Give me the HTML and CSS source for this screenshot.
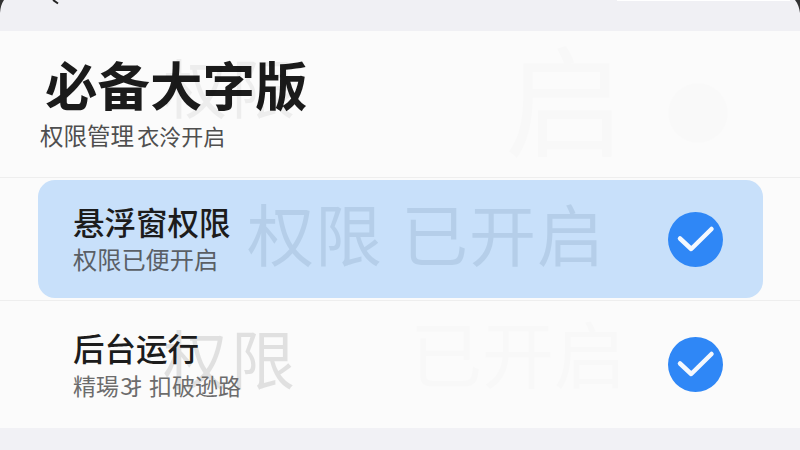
FILE: index.html
```html
<!DOCTYPE html>
<html lang="zh">
<head>
<meta charset="utf-8">
<title>必备大字版</title>
<link rel="stylesheet" href="styles.css">
</head>
<body>
<div class="screen">
  <div class="strip-top"><span class="notch-line"></span>
    <svg class="corners" viewBox="0 0 800 14" aria-hidden="true">
      <path class="mark" d="M53 0 L58 3.500"/>
      <path class="mark-fill" d="M0 13 Q0.500 5 4 0 L0 0 Z"/>
      <path class="mark-fill" d="M800 13 Q799 5 795 0 L800 0 Z"/>
    </svg>
  </div>
  <main class="panel">
    <span class="ghost ghost-title">权限</span>
    <span class="ghost ghost-top-right">启</span>
    <span class="ghost-dot"></span>
    <span class="ghost ghost-row-right">已开启</span>
    <header class="head">
      <h1 class="title">必备大字版</h1>
      <p class="subtitle">权限管理 <span class="sub-tight">衣泠开启</span></p>
    </header>
    <section class="row row-active">
      <span class="ghost-card">权限 已开启</span>
      <div class="row-text">
        <h2 class="row-title">悬浮窗权限</h2>
        <p class="row-sub">权限已便开启</p>
      </div>
      <svg class="check" viewBox="0 0 55 55" aria-hidden="true"><circle cx="27.5" cy="27.5" r="27.5"/><path d="M12 26.500 L23.200 37 L43.500 17"/></svg>
    </section>
    <section class="row row-plain">
      <span class="ghost-row">权限</span>
      <div class="row-text">
        <h2 class="row-title">后台运行</h2>
        <p class="row-sub row-sub-light">精瑒 <span class="sub-squeeze">3扌</span>扣破逊路</p>
      </div>
      <svg class="check" viewBox="0 0 55 55" aria-hidden="true"><circle cx="27.5" cy="27.5" r="27.5"/><path d="M12 26.500 L23.200 37 L43.500 17"/></svg>
    </section>
  </main>
  <div class="strip-bottom"></div>
</div>
</body>
</html>
```
FILE: styles.css
```css
html, body { margin: 0; padding: 0; }
body { width: 800px; height: 450px; overflow: hidden; background: #f1f1f5; font-family: "Noto Sans CJK SC", "Noto Sans", sans-serif; }
.screen { width: 800px; height: 450px; display: flex; flex-direction: column; }
.strip-top { height: 31px; background: #f0f0f4; position: relative; flex: none; }
.notch-line { position: absolute; left: 617px; top: 0; width: 173px; height: 1px; background: #fff; }
.corners { position: absolute; left: 0; top: 0; width: 800px; height: 14px; }
.mark { fill: none; stroke: #222; stroke-width: 2; }
.mark-fill { fill: #333; }
.strip-bottom { flex: 1; background: #f1f1f5; }
.panel { height: 397px; flex: none; background: #fbfbfb; position: relative; display: flex; flex-direction: column; }
.head { height: 147px; margin-bottom: 2px; padding: 20px 0 0 40px; box-sizing: border-box; border-bottom: 1px solid #eeeeee; }
.title { margin: 0 0 0 5px; font-size: 52.500px; line-height: 64px; font-weight: 700; color: #1b1b1b; }
.subtitle { margin: 3px 0 0; font-size: 23.500px; line-height: 34px; color: #4f4f4f; word-spacing: -2px; }
.sub-tight { font-size: 22px; }
.row { position: relative; display: flex; align-items: center; justify-content: space-between; box-sizing: border-box; }
.row-active { margin: 0 37px 0 38px; height: 118px; background: #c8e0fa; border-radius: 17px; padding: 0 40px 0 35px; }
.row-plain { margin-top: 2px; border-top: 1px solid #eeeeee; height: 128px; padding: 0 77px 0 73px; }
.row-text { position: relative; }
.row-title { margin: -2px 0 0; font-size: 31.500px; line-height: 40px; font-weight: 500; color: #1c1c1c; }
.row-sub { margin: 2px 0 0; font-size: 24.200px; line-height: 32px; color: #5a5f66; }
.row-sub-light { font-size: 23px; color: #6c6c6c; word-spacing: -4px; }
.sub-squeeze { letter-spacing: -3.500px; }
.check { width: 55px; height: 55px; flex: none; position: relative; }
.check circle { fill: #2f87f6; }
.check path { fill: none; stroke: #f4f8fe; stroke-width: 4.500; stroke-linecap: round; stroke-linejoin: round; }
.ghost, .ghost-card, .ghost-row { position: absolute; white-space: nowrap; }
.ghost { color: #000; }
.ghost-title { left: 163px; top: 9px; font-size: 64px; line-height: 90px; opacity: .05; letter-spacing: 4px; }
.ghost-top-right { left: 505px; top: 0; font-size: 120px; line-height: 130px; opacity: .006; }
.ghost-dot { position: absolute; left: 668px; top: 52px; width: 60px; height: 60px; border-radius: 50%; background: rgba(0,0,0,.006); }
.ghost-row-right { left: 410px; top: 275px; font-size: 72px; line-height: 90px; opacity: .006; }
.ghost-card { left: 209px; top: 10px; font-size: 67px; line-height: 84px; letter-spacing: 1px; word-spacing: 2px; color: #3b5f7c; opacity: .13; }
.ghost-row { left: 163px; top: 13px; font-size: 64px; line-height: 84px; letter-spacing: 4px; color: #000; opacity: .1; }
```
